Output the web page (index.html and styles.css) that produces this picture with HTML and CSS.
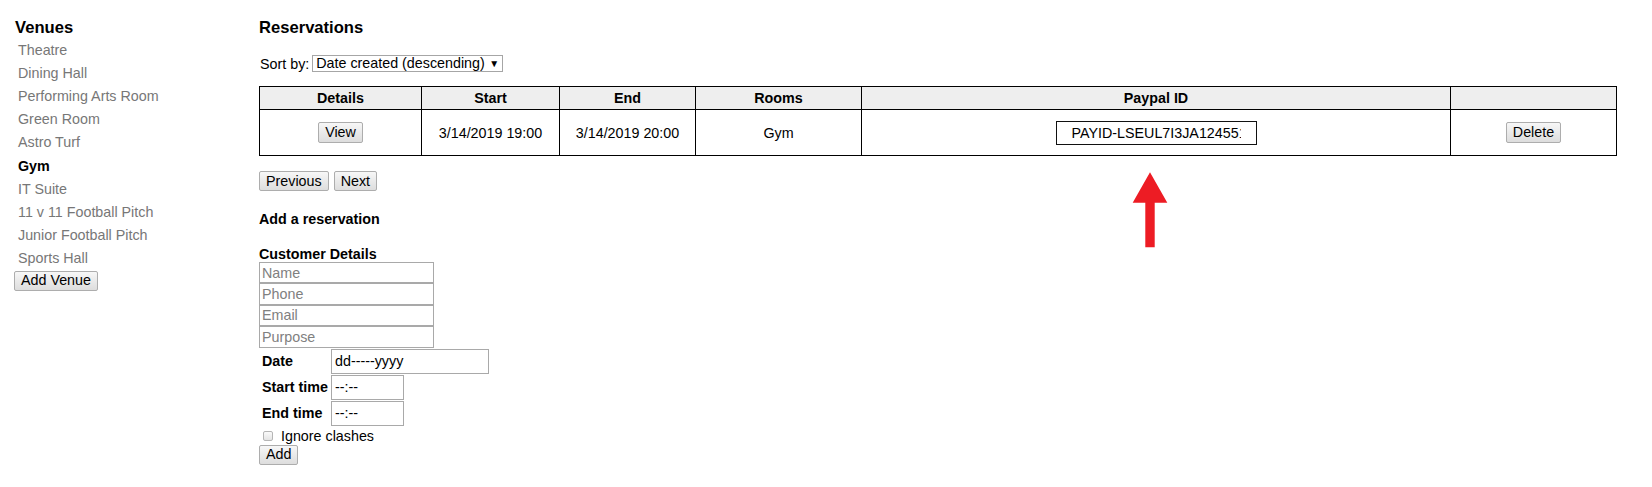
FILE: index.html
```html
<!DOCTYPE html>
<html lang="en">
<head>
<meta charset="utf-8">
<title>Reservations</title>
<link rel="stylesheet" href="styles.css">
</head>
<body>
<div class="page">
  <aside class="sidebar">
    <h2 class="title">Venues</h2>
    <ul class="venue-list">
      <li>Theatre</li>
      <li>Dining Hall</li>
      <li>Performing Arts Room</li>
      <li>Green Room</li>
      <li>Astro Turf</li>
      <li class="active">Gym</li>
      <li>IT Suite</li>
      <li>11 v 11 Football Pitch</li>
      <li>Junior Football Pitch</li>
      <li>Sports Hall</li>
    </ul>
    <button class="btn btn-venue" type="button">Add Venue</button>
  </aside>

  <main class="main">
    <h2 class="title">Reservations</h2>
    <div class="sort-row">
      <label class="sort-label" for="sort">Sort by:</label>
      <span class="select-wrap">
        <select id="sort" class="select">
          <option>Date created (descending)</option>
        </select>
      </span>
    </div>

    <table class="res-table">
      <colgroup>
        <col class="c-details">
        <col class="c-start">
        <col class="c-end">
        <col class="c-rooms">
        <col class="c-paypal">
        <col class="c-action">
      </colgroup>
      <thead>
        <tr>
          <th>Details</th>
          <th>Start</th>
          <th>End</th>
          <th>Rooms</th>
          <th>Paypal ID</th>
          <th></th>
        </tr>
      </thead>
      <tbody>
        <tr>
          <td><button class="btn" type="button">View</button></td>
          <td>3/14/2019 19:00</td>
          <td>3/14/2019 20:00</td>
          <td>Gym</td>
          <td><input class="paypal" type="text" value="PAYID-LSEUL7I3JA124551234567890" readonly></td>
          <td><button class="btn" type="button">Delete</button></td>
        </tr>
      </tbody>
    </table>

    <div class="pager">
      <button class="btn" type="button">Previous</button>
      <button class="btn" type="button">Next</button>
    </div>

    <h3 class="sub sub-add">Add a reservation</h3>
    <form class="res-form">
      <h4 class="sub sub-cust">Customer Details</h4>
      <input class="field" type="text" placeholder="Name">
      <input class="field" type="text" placeholder="Phone">
      <input class="field" type="text" placeholder="Email">
      <input class="field" type="text" placeholder="Purpose">

      <div class="dt-grid">
        <label class="dt-label">Date</label>
        <input class="dt-input dt-date" type="text" value="dd-----yyyy">
        <label class="dt-label">Start time</label>
        <input class="dt-input dt-time" type="text" value="--:--">
        <label class="dt-label">End time</label>
        <input class="dt-input dt-time" type="text" value="--:--">
      </div>

      <label class="check-row">
        <input class="check" type="checkbox">
        <span>Ignore clashes</span>
      </label>
      <button class="btn btn-add" type="button">Add</button>
    </form>
  </main>

  <svg class="arrow" width="36" height="76" viewBox="0 0 36 76" aria-hidden="true">
    <polygon points="18,0.3 35.3,30.7 22.7,30.7 22.7,75.3 13.3,75.3 13.3,30.7 0.7,30.7" fill="#ed1c24"/>
  </svg>
</div>
</body>
</html>
```

FILE: styles.css
```css
html, body {
  margin: 0;
  padding: 0;
  background: #fff;
}

body {
  font-family: "Liberation Sans", Arial, sans-serif;
  font-size: 14.3px;
  color: #000;
}

.page {
  position: relative;
  display: flex;
  align-items: flex-start;
  padding-top: 19px;
}

.title {
  margin: 0;
  font-size: 16.6px;
  font-weight: bold;
  line-height: 18px;
}

/* Sidebar */
.sidebar {
  flex: 0 0 259px;
  box-sizing: border-box;
  padding-left: 14px;
  display: flex;
  flex-direction: column;
  align-items: flex-start;
}

.sidebar .title {
  margin-left: 1px;
}

.venue-list {
  list-style: none;
  margin: 1.8px 0 0 0;
  padding: 0 0 0 4px;
}

.venue-list li {
  line-height: 23.15px;
  color: #777;
}

.venue-list li.active {
  color: #000;
  font-weight: bold;
}

/* Buttons */
.btn {
  font-family: "Liberation Sans", Arial, sans-serif;
  font-size: 14.3px;
  color: #000;
  height: 21px;
  padding: 0 6px;
  margin: 0;
  border: 1px solid #adadad;
  border-radius: 2px;
  background: linear-gradient(#f7f7f7, #dddddd);
  line-height: 17px;
  box-sizing: border-box;
}

.btn-venue {
  height: 20px;
  padding: 0 6px;
  margin-top: 0.4px;
}

/* Main */
.main {
  flex: 0 0 1357px;
  display: flex;
  flex-direction: column;
  align-items: flex-start;
}

.sort-row {
  display: flex;
  align-items: center;
  margin-top: 18px;
  height: 17px;
}

.sort-label {
  margin-left: 1px;
  margin-right: 3px;
}

.select-wrap {
  position: relative;
  display: inline-block;
}

.select {
  appearance: none;
  -webkit-appearance: none;
  width: 191px;
  height: 17px;
  box-sizing: border-box;
  border: 1px solid #a6a6a6;
  border-radius: 0;
  background: #fff;
  font-family: "Liberation Sans", Arial, sans-serif;
  font-size: 14.3px;
  line-height: 15px;
  padding: 0 0 0 3px;
  margin: 0;
  color: #000;
}

.select-wrap::after {
  content: "\25BC";
  position: absolute;
  right: 4px;
  top: 4px;
  font-size: 10px;
  line-height: 9px;
  color: #000;
  pointer-events: none;
}

/* Table */
.res-table {
  margin-top: 14px;
  width: 1357px;
  border-collapse: collapse;
  table-layout: fixed;
  border: 1px solid #000;
}

.c-details { width: 162px; }
.c-start { width: 138px; }
.c-end { width: 136px; }
.c-rooms { width: 166px; }
.c-paypal { width: 589px; }
.c-action { width: 166px; }

.res-table th,
.res-table td {
  border: 1px solid #000;
  text-align: center;
  vertical-align: middle;
  padding: 0;
}

.res-table th {
  background: #eeeeee;
  font-weight: bold;
  height: 22px;
}

.res-table td {
  height: 45px;
}

.paypal {
  width: 201px;
  height: 24px;
  box-sizing: border-box;
  border: 1px solid #111;
  padding: 0 15px;
  margin: 0;
  font-family: "Liberation Sans", Arial, sans-serif;
  font-size: 14.3px;
  color: #000;
  background: #fff;
  vertical-align: middle;
}

.pager {
  display: flex;
  gap: 5px;
  margin-top: 15px;
}

.pager .btn {
  height: 20px;
}

/* Form */
.sub {
  margin: 0;
  font-size: 14.3px;
  font-weight: bold;
  line-height: 16px;
}

.sub-add {
  margin-top: 20px;
}

.res-form {
  display: flex;
  flex-direction: column;
  align-items: flex-start;
}

.sub-cust {
  margin-top: 19px;
}

.field {
  display: block;
  width: 175px;
  height: 21.4px;
  box-sizing: border-box;
  border: 1px solid #a9a9a9;
  padding: 0 2px;
  margin: 0;
  font-family: "Liberation Sans", Arial, sans-serif;
  font-size: 14.3px;
  color: #000;
  background: #fff;
}

.field::placeholder {
  color: #808080;
}

.dt-grid {
  display: grid;
  grid-template-columns: 72px auto;
  row-gap: 1.3px;
  align-items: center;
  justify-items: start;
  padding-top: 1.3px;
}

.dt-label {
  font-weight: bold;
  padding-left: 3px;
}

.dt-input {
  height: 24.7px;
  box-sizing: border-box;
  border: 1px solid #a9a9a9;
  padding: 0 3px;
  margin: 0;
  font-family: "Liberation Sans", Arial, sans-serif;
  font-size: 14.3px;
  color: #000;
  background: #fff;
}

.dt-date { width: 158px; }
.dt-time { width: 73px; }

.check-row {
  display: flex;
  align-items: center;
  height: 17px;
  margin-top: 1.5px;
}

.check {
  appearance: none;
  -webkit-appearance: none;
  width: 10px;
  height: 10px;
  box-sizing: border-box;
  margin: 0 8px 0 4px;
  border: 1px solid #b5b5b5;
  border-radius: 2px;
  background: linear-gradient(#fafafa, #e4e4e4);
}

.btn-add {
  height: 20px;
  margin-top: 0.5px;
}

/* Annotation arrow overlaying the page */
.arrow {
  position: absolute;
  left: 1132px;
  top: 172px;
}
```
